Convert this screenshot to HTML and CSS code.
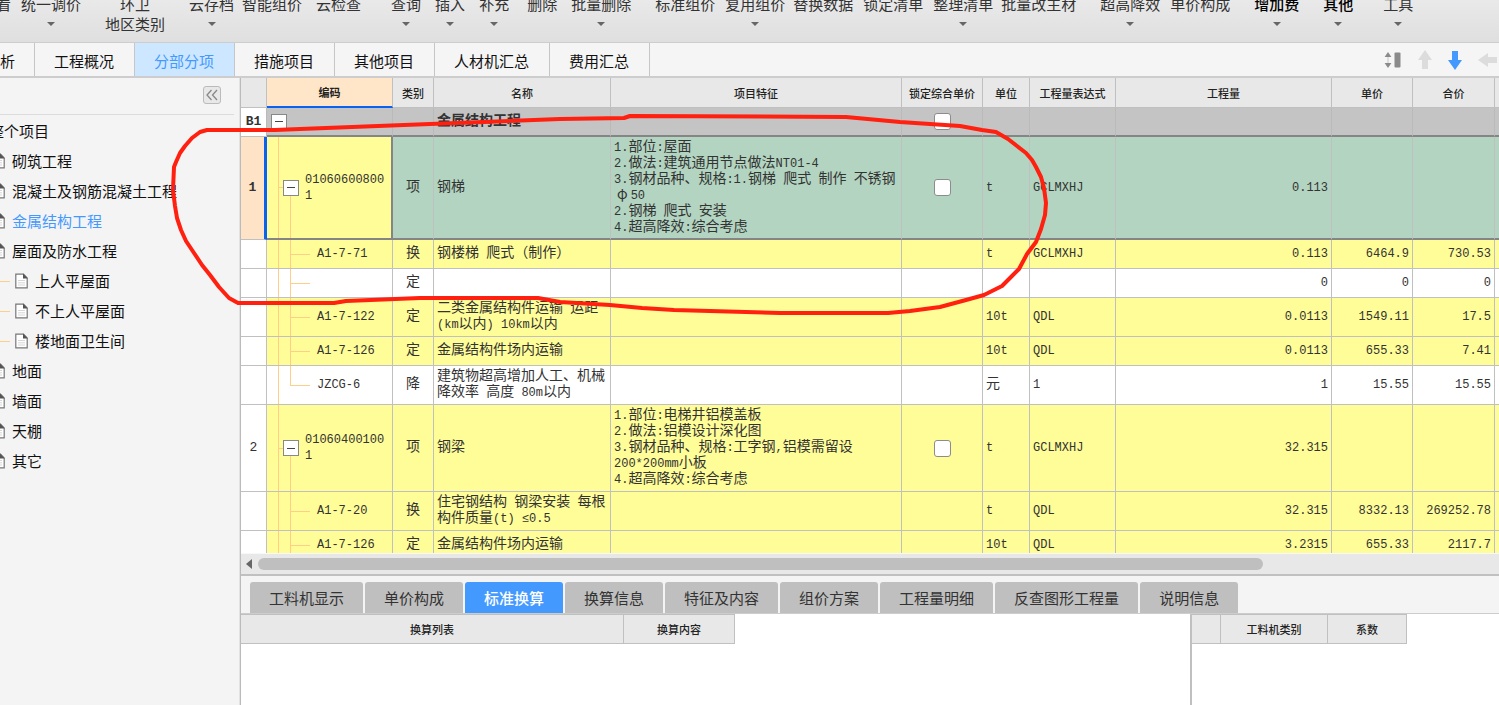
FILE: index.html
```html
<!DOCTYPE html>
<html lang="zh-CN">
<head>
<meta charset="utf-8">
<title>分部分项</title>
<link rel="stylesheet" href="styles.css">
</head>
<body>
<svg class="defs" width="0" height="0" aria-hidden="true">
  <symbol id="doc" viewBox="0 0 13 16">
    <path d="M.8 1.2h7.7l3.7 3.8v9.8H.8z" fill="#fff" stroke="#777" stroke-width="1.2"/>
    <path d="M8 .6v5h4.8z" fill="#555"/>
    <path d="M3 7.5h7M3 9.8h7M3 12h7" stroke="#ccc" stroke-width=".8"/>
  </symbol>
</svg>

<div class="toolbar">
  <button class="tool">看</button>
  <button class="tool g10">统一调价<i class="caret"></i></button>
  <button class="tool g24">环卫<span>地区类别</span></button>
  <button class="tool g24">云存档<i class="caret"></i></button>
  <button class="tool g8">智能组价</button>
  <button class="tool g14">云检查</button>
  <button class="tool g30">查询<i class="caret"></i></button>
  <button class="tool g14">插入<i class="caret"></i></button>
  <button class="tool g14">补充<i class="caret"></i></button>
  <button class="tool g18">删除</button>
  <button class="tool g14">批量删除<i class="caret"></i></button>
  <button class="tool g24">标准组价</button>
  <button class="tool g10">复用组价<i class="caret"></i></button>
  <button class="tool g8">替换数据</button>
  <button class="tool g10">锁定清单</button>
  <button class="tool g10">整理清单<i class="caret"></i></button>
  <button class="tool g8">批量改主材</button>
  <button class="tool g24">超高降效<i class="caret"></i></button>
  <button class="tool g10">单价构成</button>
  <button class="tool strong g24">增加费<i class="caret"></i></button>
  <button class="tool strong g24">其他<i class="caret"></i></button>
  <button class="tool g30">工具<i class="caret"></i></button>
</div>

<div class="tabs">
  <button class="tab tab-cut">析</button>
  <button class="tab">工程概况</button>
  <button class="tab active">分部分项</button>
  <button class="tab">措施项目</button>
  <button class="tab">其他项目</button>
  <button class="tab">人材机汇总</button>
  <button class="tab">费用汇总</button>
  <div class="moves">
    <button aria-label="行高"><svg width="18" height="18" viewBox="0 0 18 18"><path d="M4 1l3.4 5H.6zM4 17l3.4-5H.6z" fill="#8a8a8a"/><path d="M4 6v6" stroke="#ddd" stroke-width="2"/><rect x="10.500" y="1.500" width="6" height="15" rx="1" fill="#8a8a8a"/></svg></button>
    <button aria-label="上移"><svg width="14" height="20" viewBox="0 0 14 20"><path d="M7 0l7 10h-4v9H4v-9H0z" fill="#dcdcdc"/></svg></button>
    <button aria-label="下移"><svg width="14" height="20" viewBox="0 0 14 20"><path d="M7 20l7-10h-4V1H4v9H0z" fill="#4499ff"/></svg></button>
    <button aria-label="左移"><svg width="19" height="14" viewBox="0 0 19 14"><path d="M0 7l10-7v4h9v6h-9v4z" fill="#dcdcdc"/></svg></button>
  </div>
</div>

<div class="work">
  <aside class="side">
    <div class="side-head"><button class="fold" aria-label="收起"><svg width="12" height="12" viewBox="0 0 12 12" fill="none" stroke="#888" stroke-width="1.3"><path d="M5.500 1L1 6l4.500 5M11 1L6.500 6l4.500 5"/></svg></button></div>
    <ul class="tree">
      <li class="root"><a href="#">整个项目</a></li>
      <li><svg class="doc"><use href="#doc"/></svg><a href="#">砌筑工程</a></li>
      <li><svg class="doc"><use href="#doc"/></svg><a href="#">混凝土及钢筋混凝土工程</a></li>
      <li><svg class="doc"><use href="#doc"/></svg><a href="#" class="current">金属结构工程</a></li>
      <li><svg class="doc"><use href="#doc"/></svg><a href="#">屋面及防水工程</a></li>
      <li class="sub"><svg class="doc"><use href="#doc"/></svg><a href="#">上人平屋面</a></li>
      <li class="sub"><svg class="doc"><use href="#doc"/></svg><a href="#">不上人平屋面</a></li>
      <li class="sub"><svg class="doc"><use href="#doc"/></svg><a href="#">楼地面卫生间</a></li>
      <li><svg class="doc"><use href="#doc"/></svg><a href="#">地面</a></li>
      <li><svg class="doc"><use href="#doc"/></svg><a href="#">墙面</a></li>
      <li><svg class="doc"><use href="#doc"/></svg><a href="#">天棚</a></li>
      <li><svg class="doc"><use href="#doc"/></svg><a href="#">其它</a></li>
    </ul>
  </aside>

  <main class="main">
    <div class="grid-wrap">
      <table class="grid">
        <colgroup><col class="c-no"><col class="c-code"><col class="c-kind"><col class="c-name"><col class="c-feat"><col class="c-lock"><col class="c-unit"><col class="c-expr"><col><col class="c-price"><col class="c-total"><col class="c-end"></colgroup>
        <thead>
          <tr><th></th><th class="th-code">编码</th><th>类别</th><th>名称</th><th>项目特征</th><th>锁定综合单价</th><th>单位</th><th>工程量表达式</th><th>工程量</th><th>单价</th><th>合价</th><th></th></tr>
        </thead>
        <tbody>
          <tr class="h1 group"><td class="no">B1</td><td class="code top"><button class="box" aria-label="折叠"></button></td><td></td><td><span class="cn">金属结构工程</span></td><td></td><td class="mid"><input type="checkbox" aria-label="锁定综合单价 B1"></td><td></td><td></td><td></td><td></td><td></td><td></td></tr>
          <tr class="h6 selected"><td class="no">1</td><td class="code parent"><div><button class="box" aria-label="折叠"></button><span>010606008001</span></div></td><td class="mid"><span class="cn">项</span></td><td><span class="cn">钢梯</span></td><td>1.<span class="cn">部位</span>:<span class="cn">屋面</span><br>2.<span class="cn">做法</span>:<span class="cn">建筑通用节点做法</span>NT01-4<br>3.<span class="cn">钢材品种、规格</span>:1.<span class="cn">钢梯</span> <span class="cn">爬式</span> <span class="cn">制作</span> <span class="cn">不锈钢</span><br><span class="cn wide">φ</span>50<br>2.<span class="cn">钢梯</span> <span class="cn">爬式</span> <span class="cn">安装</span><br>4.<span class="cn">超高降效</span>:<span class="cn">综合考虑</span></td><td class="mid"><input type="checkbox" aria-label="锁定综合单价 1"></td><td>t</td><td>GCLMXHJ</td><td class="num">0.113</td><td></td><td></td><td></td></tr>
          <tr class="h1 yellow"><td class="no"></td><td class="code child">A1-7-71</td><td class="mid"><span class="cn">换</span></td><td><span class="cn">钢楼梯</span> <span class="cn">爬式（制作）</span></td><td></td><td></td><td>t</td><td>GCLMXHJ</td><td class="num">0.113</td><td class="num">6464.9</td><td class="num">730.53</td><td></td></tr>
          <tr class="h1"><td class="no"></td><td class="code child"></td><td class="mid"><span class="cn">定</span></td><td></td><td></td><td></td><td></td><td></td><td class="num">0</td><td class="num">0</td><td class="num">0</td><td></td></tr>
          <tr class="h2 yellow"><td class="no"></td><td class="code child">A1-7-122</td><td class="mid"><span class="cn">定</span></td><td><span class="cn">二类金属结构件运输</span> <span class="cn">运距</span><br>(km<span class="cn">以内</span>) 10km<span class="cn">以内</span></td><td></td><td></td><td>10t</td><td>QDL</td><td class="num">0.0113</td><td class="num">1549.11</td><td class="num">17.5</td><td></td></tr>
          <tr class="h1 yellow"><td class="no"></td><td class="code child">A1-7-126</td><td class="mid"><span class="cn">定</span></td><td><span class="cn">金属结构件场内运输</span></td><td></td><td></td><td>10t</td><td>QDL</td><td class="num">0.0113</td><td class="num">655.33</td><td class="num">7.41</td><td></td></tr>
          <tr class="h2"><td class="no"></td><td class="code child last">JZCG-6</td><td class="mid"><span class="cn">降</span></td><td><span class="cn">建筑物超高增加人工、机械</span><br><span class="cn">降效率</span> <span class="cn">高度</span> 80m<span class="cn">以内</span></td><td></td><td></td><td><span class="cn">元</span></td><td>1</td><td class="num">1</td><td class="num">15.55</td><td class="num">15.55</td><td></td></tr>
          <tr class="h5 yellow"><td class="no">2</td><td class="code parent"><div><button class="box" aria-label="折叠"></button><span>010604001001</span></div></td><td class="mid"><span class="cn">项</span></td><td><span class="cn">钢梁</span></td><td>1.<span class="cn">部位</span>:<span class="cn">电梯井铝模盖板</span><br>2.<span class="cn">做法</span>:<span class="cn">铝模设计深化图</span><br>3.<span class="cn">钢材品种、规格</span>:<span class="cn">工字钢</span>,<span class="cn">铝模需留设</span><br>200*200mm<span class="cn">小板</span><br>4.<span class="cn">超高降效</span>:<span class="cn">综合考虑</span></td><td class="mid"><input type="checkbox" aria-label="锁定综合单价 2"></td><td>t</td><td>GCLMXHJ</td><td class="num">32.315</td><td></td><td></td><td></td></tr>
          <tr class="h2 yellow"><td class="no"></td><td class="code child">A1-7-20</td><td class="mid"><span class="cn">换</span></td><td><span class="cn">住宅钢结构</span> <span class="cn">钢梁安装</span> <span class="cn">每根</span><br><span class="cn">构件质量</span>(t) ≤0.5</td><td></td><td></td><td>t</td><td>QDL</td><td class="num">32.315</td><td class="num">8332.13</td><td class="num">269252.78</td><td></td></tr>
          <tr class="h1 yellow"><td class="no"></td><td class="code child">A1-7-126</td><td class="mid"><span class="cn">定</span></td><td><span class="cn">金属结构件场内运输</span></td><td></td><td></td><td>10t</td><td>QDL</td><td class="num">3.2315</td><td class="num">655.33</td><td class="num">2117.7</td><td></td></tr>
        </tbody>
      </table>
    </div>
    <div class="hscroll"><svg width="7" height="12" viewBox="0 0 7 12"><path d="M6 1v10L0 6z" fill="#666"/></svg><div class="track"><div class="thumb"></div></div></div>

    <section class="detail">
      <div class="dtabs">
        <button>工料机显示</button><button>单价构成</button><button class="active">标准换算</button><button>换算信息</button><button>特征及内容</button><button>组价方案</button><button>工程量明细</button><button>反查图形工程量</button><button>说明信息</button>
      </div>
      <div class="panes">
        <div class="pane">
          <table class="mini"><tr><th class="m-list">换算列表</th><th class="m-cont">换算内容</th></tr></table>
        </div>
        <div class="pane pane-right">
          <table class="mini"><tr><th class="m-no"></th><th class="m-kind">工料机类别</th><th class="m-ratio">系数</th></tr></table>
        </div>
      </div>
    </section>
  </main>
</div>

<svg class="mark" width="1060" height="330" viewBox="0 0 1060 330" aria-hidden="true">
  <path d="M222 130H207L200 132L192 138L185 146L180 153L176 162L174 167L173 190L175 206L177 218L181 230L186 241L194 253L202 265L210 275L219 287L229 298L238 303H334L346 301L420 298H538L560 302L610 305L642 308L674 310L780 313H888L910 311L940 307L966 300L984 295L1002 286L1011 277L1019 269L1027 254L1036 242L1041 229L1045 215L1046 203L1044 188L1041 177L1036 167L1032 160L1026 153L1008 139L996 132L982 130L960 126L900 122L846 117L630 116L624 118L560 119L430 124L300 129L275 130H222"/>
</svg>
</body>
</html>
```
FILE: styles.css
```css
* { box-sizing: border-box; }

body {
  margin: 0;
  height: 100vh;
  display: flex;
  flex-direction: column;
  overflow: hidden;
  position: relative;
  background: #f4f4f4;
  color: #222;
  font: 15px/20px "Noto Sans CJK SC", sans-serif;
}

button {
  margin: 0;
  padding: 0;
  border: 0;
  background: none;
  color: inherit;
  font: inherit;
  white-space: nowrap;
}

a { color: inherit; text-decoration: none; }
.defs { position: absolute; }

/* Ribbon */
.toolbar {
  flex: none;
  height: 43px;
  display: flex;
  align-items: flex-end;
  justify-content: flex-start;
  overflow: hidden;
  margin-left: -4px;
  background: linear-gradient(#e9e9e9, #dfdfdf);
  border-bottom: 1px solid #cdcdcd;
}
.tool {
  flex: none;
  height: 48px;
  display: flex;
  flex-direction: column;
  align-items: center;
  color: #333;
}
.strong { color: #000; font-weight: 500; }
.caret {
  margin-top: 8px;
  border: 4px solid transparent;
  border-top: 4px solid #666;
  border-bottom: 0;
}
.g8 { margin-left: 8px; }
.g10 { margin-left: 10px; }
.g14 { margin-left: 14px; }
.g18 { margin-left: 18px; }
.g24 { margin-left: 24px; }
.g30 { margin-left: 30px; }

/* Page tabs */
.tabs {
  flex: none;
  height: 35px;
  display: flex;
  border-bottom: 2px solid #cdcdcd;
  background: #f5f5f5;
}
.tab {
  padding: 2px 20px 0 19px;
  border-right: 1px solid #c6c6c6;
  color: #111;
}
.tab-cut { padding: 2px 19px 0 0; }
.tab.active { background: #cce7ff; color: #4499ff; }
.moves {
  margin-left: auto;
  margin-right: 2px;
  display: flex;
  align-items: center;
  gap: 16px;
}
.moves button { display: flex; }

.work { flex: 1; min-height: 0; display: flex; }

/* Project tree */
.side {
  flex: none;
  width: 240px;
  padding-right: 5px;
  overflow: hidden;
  border-right: 1px solid #e2e2e2;
}
.side-head {
  height: 37px;
  padding: 8px 13px 0 0;
  display: flex;
  justify-content: flex-end;
  border-bottom: 1px solid #dcdcdc;
}
.fold {
  width: 18px;
  height: 18px;
  display: flex;
  align-items: center;
  justify-content: center;
  border: 1px solid #bbb;
  border-radius: 3px;
  background: #e8e8e8;
}
.tree { list-style: none; margin: 1px 0 0 -8px; padding: 0; color: #111; }
.tree li { height: 30px; display: flex; align-items: center; gap: 7px; white-space: nowrap; }
.tree .root { margin-left: -3px; }
.tree .doc { width: 13px; height: 16px; flex: none; }
.tree .sub::before { content: ""; width: 18px; height: 1px; background: #ffcf8a; margin-right: -2px; }
.tree .current { color: #4499ff; }

/* Bill of quantities */
.main {
  flex: 1;
  min-width: 0;
  display: flex;
  flex-direction: column;
  border-left: 1px solid #bbb;
}
.grid-wrap { flex: 1; min-height: 0; overflow: hidden; background: #fff; }
.grid {
  width: 100%;
  table-layout: fixed;
  border-collapse: separate;
  border-spacing: 0;
  color: #333;
  font: 12px/16px "Liberation Mono", "Noto Sans CJK SC", monospace;
}
/* The short line height keeps mixed lines on the 16px pitch */
.cn { font: 14px/10px "Noto Sans CJK SC", sans-serif; }
.wide { padding: 0 3px; }
.c-no { width: 26px; }
.c-code { width: 126px; }
.c-kind { width: 41px; }
.c-name { width: 177px; }
.c-feat { width: 291px; }
.c-lock { width: 81px; }
.c-unit { width: 47px; }
.c-expr { width: 86px; }
.c-price { width: 81px; }
.c-total { width: 82px; }
.c-end { width: 4px; }

.grid th, .mini th {
  padding: 0;
  background: #e8e8e8;
  border-right: 1px solid #c0c0c0;
  border-bottom: 1px solid #c0c0c0;
  font: 500 11px/16px "Noto Sans CJK SC", sans-serif;
  color: #222;
  white-space: nowrap;
}
.grid th { height: 30px; }
.grid .th-code { background: #ffe6c8; border-bottom: 2px solid #0a62f0; font-weight: 700; }

.grid td {
  padding: 0 3px;
  border-right: 1px solid #c0c0c0;
  border-bottom: 1px solid #c0c0c0;
  white-space: nowrap;
  vertical-align: middle;
}
.grid td:last-child, .grid th:last-child { padding: 0; border-right: 0; }
.h1 { height: 29px; }
.h2 { height: 39px; }
.h5 { height: 87px; }
.h6 { height: 103px; }
.grid .mid, .grid .no { text-align: center; padding: 0; }
.grid .num { text-align: right; }
.yellow td { background-color: #fffd98; }
.group td { background-color: #c4c4c4; border-color: #bababa; border-bottom: 2px solid #858585; }
.group .cn { font-weight: 700; }
.selected td { background-color: #b2d4c0; border-bottom: 2px solid #858585; }
.grid .no { background-color: #fff; border-bottom: 1px solid #c0c0c0; font-size: 13px; }
.group .no, .selected .no { font-weight: 700; }
.grid .selected .no { background-color: #ffe3c6; border-right: 3px solid #0a62f0; }
.grid .selected .code { background-color: #fffd98; border-right: 2px solid #858585; }

/* Tree guides inside the code column */
.grid .code {
  background-image: linear-gradient(#ffcf8a, #ffcf8a), linear-gradient(#ffcf8a, #ffcf8a), linear-gradient(#ffcf8a, #ffcf8a);
  background-repeat: no-repeat;
}
.grid .top { background-image: none; padding-left: 4px; }
.grid .child {
  padding-left: 50px;
  background-size: 1px 100%, 1px 100%, 20px 1px;
  background-position: 11px 0, 23px 0, 23px 50%;
}
.grid .last { background-size: 1px 100%, 1px 50%, 20px 1px; }
.grid .parent {
  padding: 0 0 0 16px;
  background-size: 1px 100%, 1px 50%, 8px 1px;
  background-position: 11px 0, 23px 100%, 11px 50%;
}
.parent div { display: flex; align-items: center; gap: 6px; }
.parent span { flex: 1; padding-right: 4px; white-space: normal; word-break: break-all; }
.box {
  flex: none;
  width: 16px;
  height: 16px;
  display: block;
  border: 1px solid #888;
  background: linear-gradient(#444, #444) center / 8px 1px no-repeat #fff;
}
.grid input {
  appearance: none;
  display: block;
  width: 17px;
  height: 17px;
  margin: 0 auto;
  border: 1px solid #8c8c8c;
  border-radius: 3px;
  background: #fff;
}

.hscroll {
  flex: none;
  height: 21px;
  padding: 0 0 0 5px;
  display: flex;
  align-items: center;
  gap: 5px;
  background: #e8e8e8;
  border-top: 1px solid #f8f8f8;
}
.track { flex: 1; }
.thumb { width: 81%; height: 12px; border-radius: 6px; background: #bfbfbf; }

/* Detail pane */
.detail {
  flex: none;
  height: 131px;
  display: flex;
  flex-direction: column;
  border-top: 2px solid #c0c0c0;
}
.dtabs { flex: none; display: flex; gap: 2px; height: 38px; padding: 6px 0 0 9px; border-bottom: 1px solid #ccc; }
.dtabs button { padding: 0 19px; background: #bfbfbf; border-radius: 3px 3px 0 0; color: #333; }
.dtabs .active { background: #4499ff; color: #fff; font-weight: 500; }
.panes { flex: 1; display: flex; background: #fff; }
.pane { flex: 1; }
.pane-right { flex: none; width: 309px; border-left: 2px solid #c0c0c0; }
.mini { border-collapse: separate; border-spacing: 0; table-layout: fixed; }
.mini th { height: 30px; border-top: 1px solid #c0c0c0; }
.m-list { width: 383px; }
.m-cont { width: 111px; }
.m-no { width: 29px; }
.m-kind { width: 107px; }
.m-ratio { width: 79px; }

/* Hand-drawn highlight over the selected item */
.mark { position: absolute; left: 0; top: 0; pointer-events: none; }
.mark path { fill: none; stroke: #ff2010; stroke-width: 4; stroke-linejoin: round; }
```
